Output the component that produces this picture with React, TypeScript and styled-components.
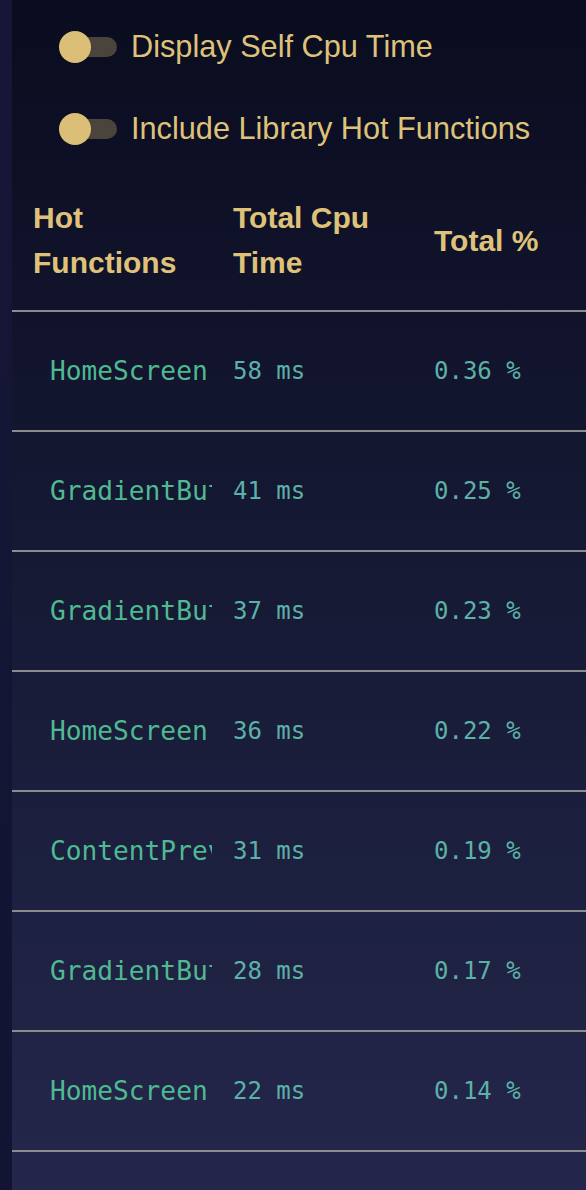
import React from "react";
import styled, { createGlobalStyle } from "styled-components";

const Global = createGlobalStyle`
  html, body { margin: 0; padding: 0; background: #151536; }
  body { font-family: "Liberation Sans", Arial, sans-serif; }
`;

const Shell = styled.div`
  display: flex;
  height: 1190px;
  overflow: hidden;
  background: linear-gradient(180deg, #161638 0%, #131333 100%);
`;

const Strip = styled.div`
  width: 12px;
  flex: none;
`;

const Panel = styled.div`
  flex: 1;
  display: flex;
  flex-direction: column;
  background: linear-gradient(180deg, #0a0c1f 0%, #161a35 50%, #24274b 100%);
  padding-top: 6px;
`;

const ToggleRow = styled.label`
  display: flex;
  flex: none;
  align-items: center;
  height: 82px;
  padding-left: 47px;
  gap: 14px;
  color: #dfc27a;
  font-size: 30.7px;
`;

const Switch = styled.span`
  position: relative;
  display: inline-block;
  width: 58px;
  height: 32px;
  flex: none;
`;

const Track = styled.span`
  position: absolute;
  left: 3px;
  right: 0;
  top: 6px;
  height: 20px;
  border-radius: 10px;
  background: #4b443c;
`;

const Knob = styled.span`
  position: absolute;
  left: 0;
  top: 0;
  width: 32px;
  height: 32px;
  border-radius: 50%;
  background: #dbbf78;
`;

const Grid = styled.div<{ $header?: boolean }>`
  display: grid;
  grid-template-columns: 200px 201px 1fr;
  align-items: center;
  height: ${(p) => (p.$header ? "140px" : "118px")};
  border-bottom: 2px solid #8c8c8f;
  flex: none;
`;

const HeadCell = styled.div`
  padding-left: 21px;
  font-weight: 700;
  font-size: 30px;
  line-height: 45px;
  color: #dfc27a;
`;

const Cell = styled.div<{ $name?: boolean }>`
  padding-left: ${(p) => (p.$name ? "38px" : "21px")};
  font-family: "DejaVu Sans Mono", "Liberation Mono", monospace;
  font-size: ${(p) => (p.$name ? "26.2px" : "24px")};
  color: ${(p) => (p.$name ? "#4fb991" : "#5cb1a7")};
  white-space: nowrap;
  overflow: hidden;
`;

const rows = [
  ["HomeScreen", "58 ms", "0.36 %"],
  ["GradientButton", "41 ms", "0.25 %"],
  ["GradientButton", "37 ms", "0.23 %"],
  ["HomeScreen", "36 ms", "0.22 %"],
  ["ContentPreview", "31 ms", "0.19 %"],
  ["GradientButton", "28 ms", "0.17 %"],
  ["HomeScreen", "22 ms", "0.14 %"],
  ["ContentPreview", "19 ms", "0.12 %"],
];

function Toggle({ label }: { label: string }) {
  return (
    <ToggleRow>
      <Switch>
        <Track />
        <Knob />
      </Switch>
      {label}
    </ToggleRow>
  );
}

export default function App() {
  return (
    <>
      <Global />
      <Shell>
        <Strip />
        <Panel>
          <Toggle label="Display Self Cpu Time" />
          <Toggle label="Include Library Hot Functions" />
          <Grid $header>
            <HeadCell>
              Hot
              <br />
              Functions
            </HeadCell>
            <HeadCell>
              Total Cpu
              <br />
              Time
            </HeadCell>
            <HeadCell>Total %</HeadCell>
          </Grid>
          {rows.map((r, i) => (
            <Grid key={i}>
              <Cell $name>{r[0]}</Cell>
              <Cell>{r[1]}</Cell>
              <Cell>{r[2]}</Cell>
            </Grid>
          ))}
        </Panel>
      </Shell>
    </>
  );
}
